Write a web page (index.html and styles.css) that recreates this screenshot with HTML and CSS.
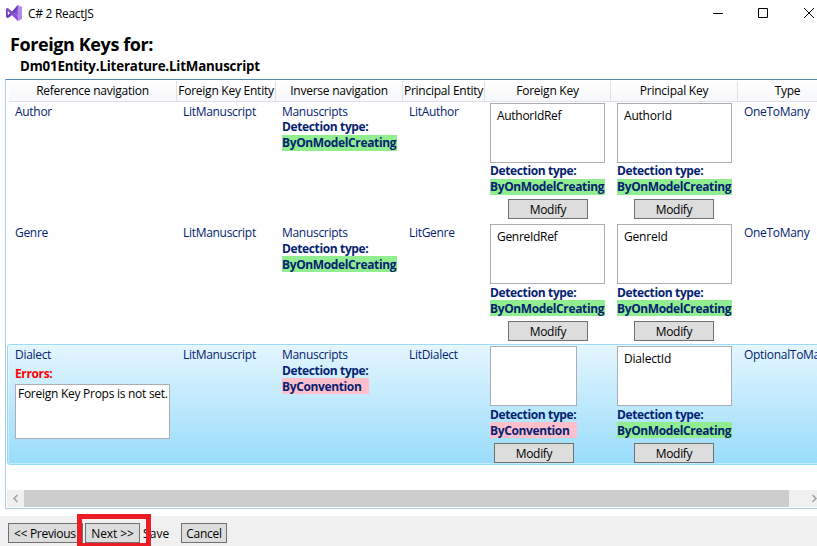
FILE: index.html
```html
<!DOCTYPE html>
<html lang="en">
<head>
<meta charset="utf-8">
<title>C# 2 ReactJS</title>
<link rel="stylesheet" href="styles.css">
</head>
<body>
<div class="window">
  <header class="titlebar">
    <svg class="logo" width="16" height="16" viewBox="0 0 16 16">
      <path fill="#6a3fb5" fill-rule="evenodd" d="M0 4 1.5 3 6 6.5 11.5 0.3 12 0 12 5 3 12.6 1.5 13 0 12ZM1.8 5.8V10.2L4 8Z"/>
      <path fill="#8350cf" fill-rule="evenodd" d="M1.5 3 12 11.5V16L11.5 15.7 0 4ZM8 8 12 4.8V11.2Z"/>
      <path fill="#b58af0" d="M11.7 0 16 2V14L11.7 16Z"/>
    </svg>
    <span class="caption">C# 2 ReactJS</span>
    <svg class="controls" width="106" height="12" viewBox="0 0 106 12" fill="none" stroke="#000">
      <path d="M2 6.5H12M47.5 1.5H56.5V10.5H47.5ZM93 1 103 11M103 1 93 11"/>
    </svg>
  </header>
  <h1>Foreign Keys for:</h1>
  <h2>Dm01Entity.Literature.LitManuscript</h2>

  <main class="list">
    <div class="grid head">
      <span>Reference navigation</span><span>Foreign Key Entity</span><span>Inverse navigation</span><span>Principal Entity</span><span>Foreign Key</span><span>Principal Key</span><span>Type</span>
    </div>
    <div class="grid row first">
      <div><p class="name">Author</p></div>
      <div><p class="name">LitManuscript</p></div>
      <div><p class="name">Manuscripts</p><b>Detection type:</b><b class="tag ok">ByOnModelCreating</b></div>
      <div><p class="name">LitAuthor</p></div>
      <div class="key"><p class="props">AuthorIdRef</p><b>Detection type:</b><b class="tag ok">ByOnModelCreating</b><button>Modify</button></div>
      <div class="key principal"><p class="props">AuthorId</p><b>Detection type:</b><b class="tag ok">ByOnModelCreating</b><button>Modify</button></div>
      <div><p class="name">OneToMany</p></div>
    </div>
    <div class="grid row second">
      <div><p class="name">Genre</p></div>
      <div><p class="name">LitManuscript</p></div>
      <div><p class="name">Manuscripts</p><b>Detection type:</b><b class="tag ok">ByOnModelCreating</b></div>
      <div><p class="name">LitGenre</p></div>
      <div class="key"><p class="props">GenreIdRef</p><b>Detection type:</b><b class="tag ok">ByOnModelCreating</b><button>Modify</button></div>
      <div class="key principal"><p class="props">GenreId</p><b>Detection type:</b><b class="tag ok">ByOnModelCreating</b><button>Modify</button></div>
      <div><p class="name">OneToMany</p></div>
    </div>
    <div class="grid row selected">
      <div><p class="name">Dialect</p><b class="err">Errors:</b><p class="errbox">Foreign Key Props is not set.</p></div>
      <div><p class="name">LitManuscript</p></div>
      <div><p class="name">Manuscripts</p><b>Detection type:</b><b class="tag conv">ByConvention</b></div>
      <div><p class="name">LitDialect</p></div>
      <div class="key narrow"><p class="props"></p><b>Detection type:</b><b class="tag conv">ByConvention</b><button>Modify</button></div>
      <div class="key principal"><p class="props">DialectId</p><b>Detection type:</b><b class="tag ok">ByOnModelCreating</b><button>Modify</button></div>
      <div><p class="name">OptionalToMany</p></div>
    </div>
    <div class="scroll">
      <svg width="17" height="17" viewBox="0 0 17 17" fill="none" stroke="#a0a0a0" stroke-width="1.5"><path d="M10.5 5 7 8.5 10.5 12"/></svg>
      <div class="thumb"></div>
      <svg width="17" height="17" viewBox="0 0 17 17" fill="none" stroke="#a0a0a0" stroke-width="1.5"><path d="M7.5 5 11 8.5 7.5 12"/></svg>
    </div>
  </main>

  <footer class="footer">
    <button class="prev">&lt;&lt; Previous</button>
    <button class="next">Next &gt;&gt;</button>
    <span class="save">Save</span>
    <button class="cancel">Cancel</button>
    <div class="marker"></div>
  </footer>
</div>
</body>
</html>
```
FILE: styles.css
```css
* { box-sizing: border-box; margin: 0; padding: 0; }
body { overflow: hidden; background: #fff; }
.window {
  width: 817px; height: 546px; overflow: hidden;
  display: flex; flex-direction: column;
  font: 12px/16px "Open Sans", "Noto Sans", sans-serif;
  letter-spacing: -0.3px; color: #000; white-space: nowrap;
}
.titlebar { height: 29px; flex: none; display: flex; align-items: center; padding: 0 0 3px 6px; }
.caption { margin: 2px 0 0 6px; flex: 1; }
h1 { font-size: 18px; line-height: 26px; height: 26px; margin: 2px 0 0 10px; letter-spacing: -0.4px; flex: none; }
h2 { font-size: 13.3px; line-height: 18px; height: 22px; margin-left: 20px; letter-spacing: -0.17px; flex: none; }
.list { height: 430px; width: 820px; margin-left: 5px; border: 1px solid #abcfe6; border-top-color: #4f8ab5; flex: none; padding: 1px; }
.grid { display: grid; grid-template-columns: 169px 99px 127px 82px 126px 127px 100px; width: 830px; }
.head { height: 20px; margin-left: 1px; letter-spacing: -0.25px; }
.head span { border-right: 1px solid #dfe1e4; border-bottom: 1px solid #dfe1e4; background: linear-gradient(#fff, #f7f8fa); text-align: center; line-height: 20px; }
.head span:first-child { margin-left: 1px; }
.row { height: 121px; padding-top: 2px; color: #042271; border-radius: 3px; }
.row.second { height: 122px; }
.row > div { padding-left: 7px; }
.row > div:first-child { padding-left: 8px; }
.name { height: 16px; line-height: 14px; padding-top: 2px; }
.row b { display: block; height: 16px; letter-spacing: -0.37px; }
.second b, .selected b { padding-top: 1px; }
.tag { width: 115px; }
.tag.conv { width: 87px; background: #ffc0cb; }
.tag.ok { background: #90ee90; }
.row > .key { width: 121px; padding-left: 6px; display: flex; flex-direction: column; }
.row > .narrow { width: 93px; }
.row > .principal { margin-left: 1px; }
.props { height: 60px; border: 1px solid #abadb3; background: #fff; color: #000; padding: 4px 6px; flex: none; }
button { font: inherit; letter-spacing: inherit; height: 20px; border: 1px solid #707070; background: #ddd; color: #000; }
.key button { width: 80px; margin: 5px 0 0 18px; line-height: 20px; }
.principal button { margin-left: 17px; }
.narrow button { margin-left: 4px; }
.first .key button { margin-top: 4px; }
.selected { grid-template-columns: 168px 99px 127px 82px 126px 127px 100px; border: 1px solid #98dcfb; background: linear-gradient(#e4f6fe, #98dcfb); padding-top: 1px; box-shadow: inset 0 0 0 1px rgba(255,255,255,.4); }
.selected > div:first-child { padding-left: 7px; }
.row .err { color: #f00; margin: 3px 0; }
.errbox { width: 155px; height: 55px; border: 1px solid #abadb3; background: #fff; color: #000; padding: 1px 2px; letter-spacing: -0.27px; }
.scroll { margin-top: 25px; height: 17px; width: 816px; background: #f0f0f0; display: flex; }
.thumb { width: 765px; background: #cdcdcd; margin-right: 16px; }
.footer { position: relative; height: 37px; margin-top: 7px; background: #f0f0f0; flex: none; display: flex; padding: 7px 0 0 8px; }
.footer button { line-height: 20px; }
.prev { width: 75px; text-align: left; padding-left: 5px; }
.footer .next { width: 55px; margin-left: 2px; letter-spacing: -0.1px; }
.save { width: 38px; margin-left: 3px; line-height: 22px; letter-spacing: 0.1px; }
.cancel { width: 46px; }
.marker { position: absolute; left: 77px; top: -2px; width: 74px; height: 34px; border: 5px solid #ed1c24; }
.principal .props { letter-spacing: -0.2px; }
```
